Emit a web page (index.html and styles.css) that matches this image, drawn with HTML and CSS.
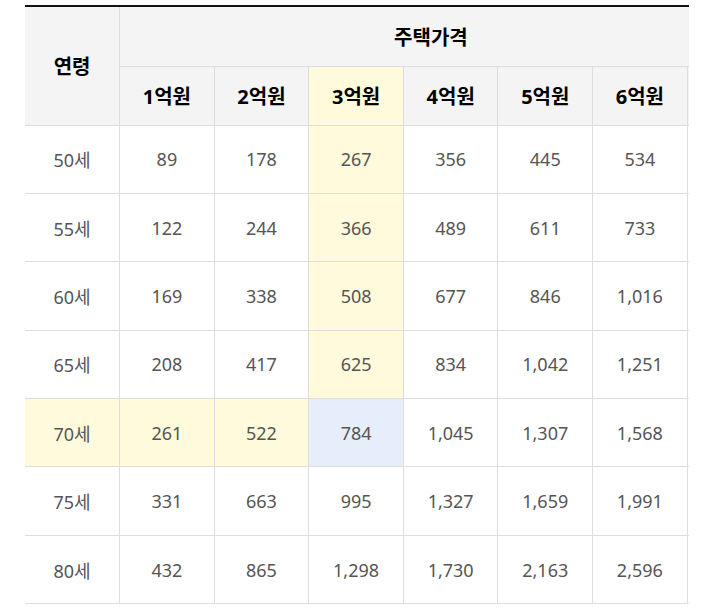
FILE: index.html
```html
<!DOCTYPE html>
<html lang="ko">
<head>
<meta charset="utf-8">
<link rel="stylesheet" href="styles.css">
</head>
<body>
<div class="page">
  <div class="scroller">
    <table class="price-table">
      <colgroup>
        <col class="c-age"><col class="c"><col class="c"><col class="c"><col class="c"><col class="c"><col class="c"><col class="c-extra">
      </colgroup>
      <thead>
        <tr class="h1">
          <th rowspan="2" class="age-head">연령</th>
          <th colspan="7">주택가격</th>
        </tr>
        <tr class="h2">
          <th>1억원</th><th>2억원</th><th class="hl">3억원</th><th>4억원</th><th>5억원</th><th>6억원</th><th></th>
        </tr>
      </thead>
      <tbody>
        <tr><td class="age">50세</td><td>89</td><td>178</td><td class="hl">267</td><td>356</td><td>445</td><td>534</td><td></td></tr>
        <tr><td class="age">55세</td><td>122</td><td>244</td><td class="hl">366</td><td>489</td><td>611</td><td>733</td><td></td></tr>
        <tr><td class="age">60세</td><td>169</td><td>338</td><td class="hl">508</td><td>677</td><td>846</td><td>1,016</td><td></td></tr>
        <tr><td class="age">65세</td><td>208</td><td>417</td><td class="hl">625</td><td>834</td><td>1,042</td><td>1,251</td><td></td></tr>
        <tr class="row-hl"><td class="age hl">70세</td><td class="hl">261</td><td class="hl">522</td><td class="cross">784</td><td>1,045</td><td>1,307</td><td>1,568</td><td></td></tr>
        <tr><td class="age">75세</td><td>331</td><td>663</td><td>995</td><td>1,327</td><td>1,659</td><td>1,991</td><td></td></tr>
        <tr><td class="age">80세</td><td>432</td><td>865</td><td>1,298</td><td>1,730</td><td>2,163</td><td>2,596</td><td></td></tr>
      </tbody>
    </table>
  </div>
</div>
</body>
</html>
```

FILE: styles.css
```css
html, body {
  margin: 0;
  padding: 0;
  background: #ffffff;
}
.page {
  padding: 5px 0 0 25px;
}
.scroller {
  width: 664px;
  overflow: hidden;
  border-top: 2px solid #111111;
}
.price-table {
  border-collapse: collapse;
  table-layout: fixed;
  width: 717px;
  font-family: "Noto Sans", "Noto Sans CJK KR", sans-serif;
  font-size: 18px;
}
.c-age { width: 94.6px; }
.c { width: 94.6px; }
.c-extra { width: 55px; }
.price-table th,
.price-table td {
  border: 1px solid #dddddd;
  text-align: center;
  vertical-align: middle;
  padding: 0;
}
.price-table th {
  background: #f4f4f4;
  color: #000000;
  font-weight: 700;
  font-size: 20px;
}
.price-table thead tr:first-child th {
  border-top: none;
}
.price-table tr > :first-child {
  border-left: none;
}
.h1, .h2 { height: 59px; }
.price-table tbody tr { height: 68.4px; }
.price-table td {
  color: #555555;
  background: #ffffff;
}
.price-table th.hl,
.price-table td.hl {
  background: #fffadc;
}
.price-table td.cross {
  background: #e7eefb;
}
```
